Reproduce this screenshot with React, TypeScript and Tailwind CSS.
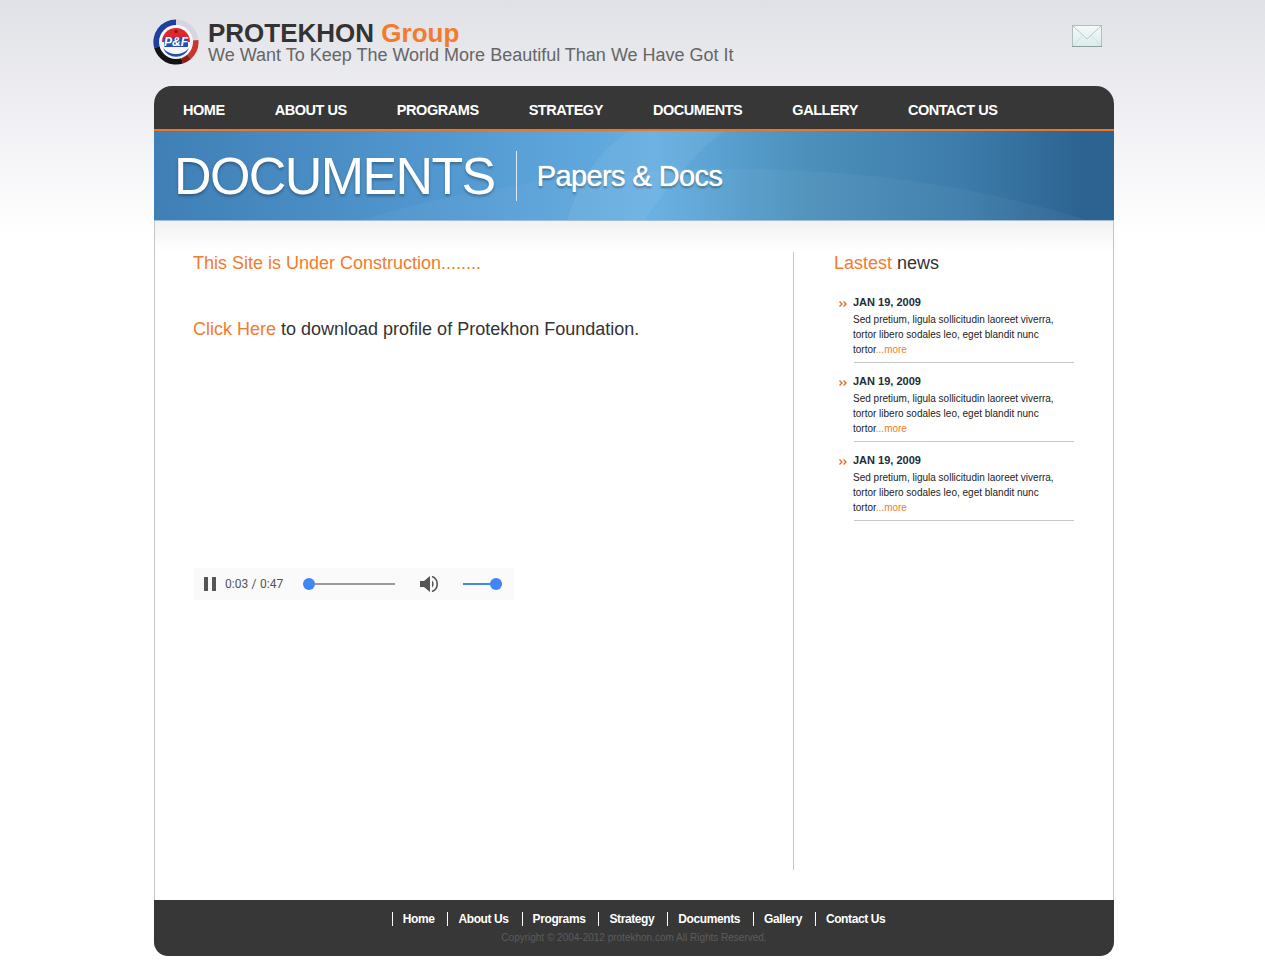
const navItems = ["HOME", "ABOUT US", "PROGRAMS", "STRATEGY", "DOCUMENTS", "GALLERY", "CONTACT US"];
const footerItems = ["Home", "About Us", "Programs", "Strategy", "Documents", "Gallery", "Contact Us"];
const newsItems = [1, 2, 3];

function Logo() {
  return (
    <svg width="46" height="46" viewBox="0 0 46 46" className="shrink-0">
      <circle cx="23" cy="23" r="22.5" fill="#d5d7e0" />
      {/* outer ring segments */}
      <path d="M23 23 L23 .5 A22.5 22.5 0 0 0 1.2 29 Z" fill="#1c3fa0" />
      <path d="M23 23 L45.4 21 A22.5 22.5 0 0 1 38 40 Z" fill="#c8372d" />
      <path d="M23 23 L1.2 29 A22.5 22.5 0 0 0 30 44.4 Z" fill="#131313" />
      <path d="M23 23 L30 44.4 A22.5 22.5 0 0 0 38 40 Z" fill="#8c1b1b" />
      <circle cx="23" cy="23" r="17" fill="#f7f7f9" />
      {/* inner disc */}
      <path d="M9 23 A14 14 0 0 1 37 23 Z" fill="#e0252b" />
      <path d="M10 29 A14 14 0 0 0 36 29 A17 17 0 0 1 10 29 Z" fill="#2350b4" />
      <rect x="11" y="18" width="24" height="10" rx="1" fill="#2350b4" />
      <circle cx="23" cy="12.5" r="1.5" fill="#7e1216" />
      <text x="23" y="27" textAnchor="middle" fontFamily="'Liberation Sans', sans-serif" fontWeight="700" fontStyle="italic" fontSize="12" fill="#fff">P&amp;F</text>
    </svg>
  );
}

function Envelope() {
  return (
    <svg width="30" height="22" viewBox="0 0 30 22">
      <defs>
        <linearGradient id="env" x1="0" y1="0" x2="0" y2="1">
          <stop offset="0" stopColor="#f5faf9" />
          <stop offset="1" stopColor="#dcebe8" />
        </linearGradient>
      </defs>
      <rect x=".5" y=".5" width="29" height="21" fill="url(#env)" stroke="#aebfbf" />
      <path d="M1 1 L15 14 L29 1" fill="none" stroke="#b4c8c5" />
      <path d="M1 21 L11 10 M29 21 L19 10" fill="none" stroke="#d0e0dd" />
      <path d="M0 21.5 H30" stroke="#88a0a0" />
    </svg>
  );
}

function Player() {
  return (
    <div className="mt-[228px] flex h-8 w-[320px] items-center bg-[#fafafa] text-[#555555]">
      <div className="ml-[10px] flex gap-[4px]">
        <div className="h-[14px] w-1 bg-[#555555]" />
        <div className="h-[14px] w-1 bg-[#555555]" />
      </div>
      <span className="ml-[9px] w-[78px] text-[12px] font-['Roboto',sans-serif] [word-spacing:0.5px]">0:03 / 0:47</span>
      <div className="relative h-[2px] w-[92px] bg-[#999999]">
        <div className="absolute -top-[5px] left-0 h-3 w-3 rounded-full bg-[#4285f4]" />
      </div>
      <svg width="20" height="20" viewBox="0 0 20 20" className="ml-[24px]">
        <path d="M1 7 H5 L11 2 V18 L5 13 H1 Z" fill="#555555" />
        <path d="M13 6.5 A4.5 4.5 0 0 1 13 13.5 Z" fill="#555555" />
        <path d="M13 2.5 A8 8 0 0 1 13 17.5" fill="none" stroke="#555555" strokeWidth="1.6" />
      </svg>
      <div className="relative ml-[24px] h-[2px] w-[39px] bg-[#4285f4]">
        <div className="absolute -top-[5px] right-0 h-3 w-3 rounded-full bg-[#4285f4]" />
      </div>
    </div>
  );
}

function NewsItem() {
  return (
    <div className="relative mb-[11px] ml-5 w-[220px] border-b border-[#c8c8c8] pb-[5px]">
      <svg width="8" height="6" viewBox="0 0 8 6" className="absolute -left-[15px] top-[6px]">
        <path d="M.5 .5 L3 3 L.5 5.5 M4.5 .5 L7 3 L4.5 5.5" fill="none" stroke="#e8651d" strokeWidth="1.3" />
      </svg>
      <div className="-ml-px text-[11px] leading-[15px] font-bold text-[#222b35]">JAN 19, 2009</div>
      <p className="-ml-px mt-[2px] text-[10px] leading-[15px] text-[#222222]">
        Sed pretium, ligula sollicitudin laoreet viverra,
        <br />
        tortor libero sodales leo, eget blandit nunc
        <br />
        tortor<span className="text-[#f47b2b]">...more</span>
      </p>
    </div>
  );
}

export default function App() {
  return (
    <div className="min-h-[977px] bg-gradient-to-b from-[#e0e1e6] from-0% via-[#f0f0f4] via-[12%] to-white to-[24%] font-['Liberation_Sans',Arial,sans-serif]">
      <div className="ml-[154px] w-[960px]">
        {/* Header */}
        <header className="flex h-[86px] items-start">
          <div className="-ml-[1px] mt-[19px]">
            <Logo />
          </div>
          <div className="ml-[9px] mt-[20px]">
            <div className="text-[26px] leading-[26px] font-bold text-[#333333]">
              PROTEKHON <span className="text-[#f47b2b]">Group</span>
            </div>
            <div className="text-[18px] leading-[18px] text-[#666666]">We Want To Keep The World More Beautiful Than We Have Got It</div>
          </div>
          <div className="ml-auto mr-[12px] mt-[25px]">
            <Envelope />
          </div>
        </header>

        {/* Nav */}
        <nav className="flex h-[45px] items-center gap-[50px] rounded-t-[18px] border-b-2 border-[#e8772a] bg-[#373737] pl-[29px] pt-[6px]">
          {navItems.map((item) => (
            <a key={item} className="text-[14.5px] font-bold tracking-[-0.45px] text-white">
              {item}
            </a>
          ))}
        </nav>

        {/* Banner */}
        <div className="relative flex h-[90px] items-center overflow-hidden border-b border-[#a4bed3] bg-[linear-gradient(90deg,#3f7fb5_0%,#5298d0_30%,#64aee2_52%,#4c90bb_68%,#3d7cab_84%,#2c6390_97%)]">
          <svg className="absolute inset-0" width="960" height="90" viewBox="0 0 960 90">
            <path d="M413 90 Q430 30 475 0 L570 0 Q530 30 490 90 Z" fill="#ffffff" fillOpacity="0.06" />
            <path d="M203 90 Q330 50 509 39 Q700 32 846 66 Q900 78 936 90 Z" fill="#ffffff" fillOpacity="0.04" />
          </svg>
          <h1 className="relative ml-[20px] text-[52px] leading-none tracking-[-1.6px] text-white [text-shadow:0_2px_3px_rgba(0,0,0,0.3)]">DOCUMENTS</h1>
          <div className="relative ml-[21px] h-[50px] w-px bg-white/80" />
          <div className="relative ml-[20px] mt-[2px] text-[29px] leading-none tracking-[-0.6px] text-white [text-shadow:0_0_1px_#fff,0_2px_2px_rgba(0,0,0,0.35)]">Papers &amp; Docs</div>
        </div>

        {/* Content */}
        <div className="flex h-[679px] border-x border-[#c4c4c4] bg-gradient-to-b from-[#f1f1f3] to-white to-[30px] pt-[31px]">
          <main className="h-[618px] w-[639px] border-r border-[#c4c4c4] pl-[39px]">
            <p className="-ml-px text-[18px] leading-[22px] text-[#f47b2b]">This Site is Under Construction........</p>
            <p className="-ml-px mt-[44px] text-[18px] leading-[22px] text-[#333333]">
              <span className="text-[#f47b2b]">Click Here</span> to download profile of Protekhon Foundation.
            </p>
            <Player />
          </main>
          <aside className="pl-[40px]">
            <h2 className="mb-[20px] text-[18px] leading-[23px] text-[#333333]">
              <span className="text-[#f47b2b]">Lastest</span> news
            </h2>
            {newsItems.map((n) => (
              <NewsItem key={n} />
            ))}
          </aside>
        </div>

        {/* Footer */}
        <footer className="h-[56px] rounded-b-[14px] bg-[#373737] pt-3 text-center">
          <div className="flex justify-center pl-[22px]">
            {footerItems.map((item) => (
              <a key={item} className="border-l border-white pl-[10px] pr-[13px] text-[12px] leading-[14px] font-bold tracking-[-0.4px] text-white">
                {item}
              </a>
            ))}
          </div>
          <div className="mt-[6px] text-[10px] leading-[12px] text-[#5c5c5c]">Copyright © 2004-2012 protekhon.com All Rights Reserved.</div>
        </footer>
      </div>
    </div>
  );
}
